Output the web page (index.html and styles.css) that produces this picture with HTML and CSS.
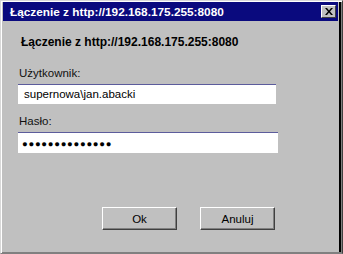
FILE: index.html
```html
<!DOCTYPE html>
<html>
<head>
<meta charset="utf-8">
<link rel="stylesheet" href="styles.css">
</head>
<body>
<div class="window">
  <div class="titlebar">
    <span class="title">Łączenie z http://192.168.175.255:8080</span>
    <span class="close"><svg width="8" height="7" viewBox="0 0 8 7"><path d="M0 0h2l2 2.5L6 0h2L5 3.5 8 7H6L4 4.5 2 7H0l3-3.5z" fill="#000"/></svg></span>
  </div>
  <div class="body">
    <div class="heading">Łączenie z http://192.168.175.255:8080</div>
    <div class="label first">Użytkownik:</div>
    <div class="field user">supernowa\jan.abacki</div>
    <div class="label">Hasło:</div>
    <div class="field pass">●●●●●●●●●●●●●●</div>
    <div class="buttons">
      <div class="btn">Ok</div>
      <div class="btn">Anuluj</div>
    </div>
  </div>
</div>
</body>
</html>
```
FILE: styles.css
```css
html, body {
  margin: 0;
  padding: 0;
  width: 343px;
  height: 254px;
  overflow: hidden;
  background: #c0c0c0;
}
.window {
  box-sizing: border-box;
  width: 343px;
  height: 254px;
  background: #c0c0c0;
  border-left: 1px solid #d8d8d8;
  border-top: 1px solid #d8d8d8;
  border-right: 1px solid #404040;
  border-bottom: 1px solid #808080;
  box-shadow: inset 1px 1px 0 #ffffff, inset -1px -1px 0 #808080, inset -3px 0 0 #000;
  padding: 1px 4px 2px 2px;
  font-family: "Liberation Sans", Arial, sans-serif;
  display: flex;
  flex-direction: column;
}
.titlebar {
  height: 19px;
  background: #0a0a7e;
  display: flex;
  align-items: center;
  justify-content: space-between;
  padding: 0 2px 0 7px;
}
.title {
  color: #fff;
  font-weight: bold;
  font-size: 11.8px;
}
.close {
  width: 15px;
  height: 13px;
  box-sizing: border-box;
  background: #c0c0c0;
  border-top: 1px solid #fff;
  border-left: 1px solid #fff;
  border-right: 1px solid #404040;
  border-bottom: 1px solid #404040;
  display: flex;
  align-items: center;
  justify-content: center;
}
.close svg { display: block; }
.body {
  flex: 1;
  padding: 14px 0 0 15px;
  display: flex;
  flex-direction: column;
}
.heading {
  font-weight: bold;
  font-size: 12px;
  color: #000;
  height: 14px;
  padding-left: 3px;
}
.label {
  font-size: 11.5px;
  color: #111;
  padding-left: 1px;
  height: 14px;
  margin-top: 11px;
  margin-bottom: 3px;
}
.label.first { margin-top: 18px; }
.field {
  background: #fff;
  border-top: 1px solid #5c5c9c;
  box-sizing: border-box;
  height: 20px;
  font-size: 11.5px;
  color: #000;
  padding: 3px 0 0 6px;
}
.field.user { width: 258px; }
.field.pass {
  width: 260px;
  height: 21px;
  font-size: 9.5px;
  letter-spacing: 0.7px;
  padding-top: 5px;
  padding-left: 4px;
}
.buttons {
  display: flex;
  gap: 23px;
  margin-top: 54px;
  padding-left: 84px;
}
.btn {
  box-sizing: border-box;
  width: 75px;
  height: 23px;
  background: #c0c0c0;
  border-top: 1px solid #fff;
  border-left: 1px solid #fff;
  border-right: 1px solid #404040;
  border-bottom: 1px solid #404040;
  box-shadow: inset -1px -1px 0 #808080;
  font-size: 11.5px;
  color: #000;
  display: flex;
  align-items: center;
  justify-content: center;
}
```
